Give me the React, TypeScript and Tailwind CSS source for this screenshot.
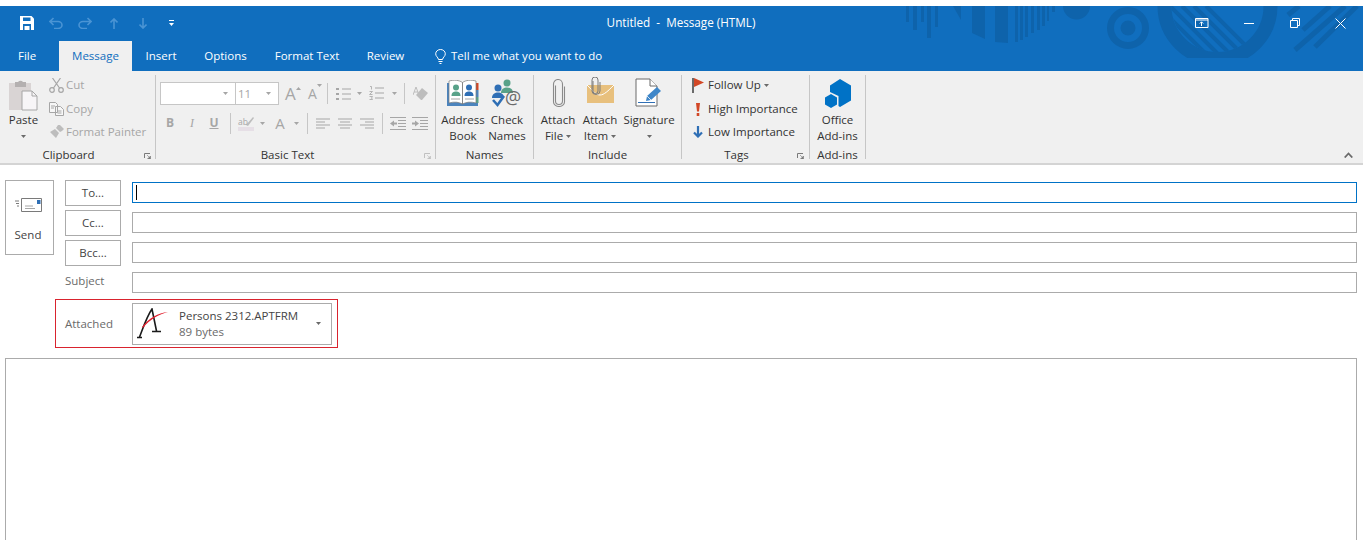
import React from "react";

const Caret = ({ color = "#6a6a6a" }: { color?: string }) => (
  <svg width="5" height="3" viewBox="0 0 5 3" className="shrink-0">
    <path d="M0 0h5L2.5 3z" fill={color} />
  </svg>
);

const Launcher = ({ color = "#7a7a7a" }: { color?: string }) => (
  <svg width="7" height="6" viewBox="0 0 7 6" className="shrink-0">
    <path d="M.5 5V.5H6" fill="none" stroke={color} />
    <path d="M3 2l3 3M6.5 3v3H3.5z" fill={color} stroke={color} strokeWidth=".6" />
  </svg>
);

const Sep = ({ className }: { className: string }) => (
  <div className={`w-px bg-[#c6c6c6] shrink-0 ${className}`} />
);

// three or four short lines, used by the align and indent buttons
const Lines = ({ kind }: { kind: "left" | "center" | "right" }) => {
  const rows: [number, number][] =
    kind === "left"
      ? [[0, 14], [0, 9], [0, 14], [0, 9]]
      : kind === "center"
        ? [[0, 14], [2, 12], [0, 14], [2, 12]]
        : [[0, 14], [5, 14], [0, 14], [5, 14]];
  return (
    <svg width="14" height="11" viewBox="0 0 14 11" className="block">
      {rows.map((r, i) => (
        <path key={i} d={`M${r[0]} ${i * 3 + 1}H${r[1]}`} stroke="#a6a6a6" />
      ))}
    </svg>
  );
};

const SmallRow = ({
  icon,
  label,
  caret,
  className,
}: {
  icon: React.ReactNode;
  label: string;
  caret?: boolean;
  className: string;
}) => (
  <div className={`flex items-center h-[20px] ${className}`}>
    <div className="w-[18px] flex justify-center shrink-0">{icon}</div>
    <span className="ml-[1px] whitespace-nowrap">{label}</span>
    {caret && (
      <div className="ml-[3px]">
        <Caret />
      </div>
    )}
  </div>
);

const BigButton = ({
  icon,
  lines,
  caret,
  className,
}: {
  icon: React.ReactNode;
  lines: string[];
  caret?: boolean;
  className: string;
}) => (
  <div className={`flex flex-col items-center ${className}`}>
    <div className="h-[37px] w-full flex justify-center pt-[4px]">{icon}</div>
    {lines.map((l, i) => (
      <div key={l} className="h-[16px] leading-[16px] whitespace-nowrap flex items-center gap-[3px]">
        {l}
        {caret && lines.length > 1 && i === lines.length - 1 && <Caret />}
      </div>
    ))}
    {caret && lines.length === 1 && (
      <div className="h-[16px] flex items-center">
        <Caret />
      </div>
    )}
  </div>
);

const Group = ({
  label,
  width,
  labelClass = "",
  launcher,
  launcherColor,
  launcherClass = "",
  children,
}: {
  label: string;
  width: string;
  labelClass?: string;
  launcher?: boolean;
  launcherColor?: string;
  launcherClass?: string;
  children: React.ReactNode;
}) => (
  <div className={`${width} h-[84px] border-r border-[#c6c6c6] flex flex-col shrink-0`}>
    <div className="h-[72px]">{children}</div>
    <div className="h-[12px] flex items-start">
      <span className={`flex-1 text-center leading-[16px] ${labelClass}`}>{label}</span>
      {launcher && (
        <div className={`mt-[6px] ${launcherClass}`}>
          <Launcher color={launcherColor} />
        </div>
      )}
    </div>
  </div>
);

const TitleArt = () => (
  <svg
    className="absolute right-0 top-0 w-[457px] h-[65px]"
    viewBox="906 6 457 65"
    fill="#0e63ab"
  >
    <defs>
      <clipPath id="inner">
        <circle cx="1217.5" cy="6" r="46" />
      </clipPath>
      <clipPath id="flat">
        <rect x="906" y="6" width="457" height="52" />
      </clipPath>
    </defs>
    <path d="M906 6h3v16h-3zM913 6h4v24h-4zM921 6h3v16h-3zM927 6h4v32h-4zM935 6h3v21h-3z" />
    <path d="M953 6h8v14zM972 6h13v33l-13-6zM995 6h13v37l-13-1z" />
    <path d="M1015 6h3v36h-3zM1020 6h3v34h-3zM1025 6h3v31h-3zM1031 6h3v27h-3zM1037 6h3v24h-3zM1042 6h3v20h-3zM1047 6h2v15h-2zM1052 6h3v6h-3z" />
    <path d="M1063 6h27a13.500 13.500 0 0 1-27 0z" />
    <circle cx="1128" cy="28" r="17.500" fill="none" stroke="#0e63ab" strokeWidth="7" />
    <circle cx="1128" cy="28" r="7.500" />
    <g clipPath="url(#flat)">
      <circle cx="1217.500" cy="6" r="53" fill="none" stroke="#0e63ab" strokeWidth="14" />
    </g>
    <g clipPath="url(#inner)" stroke="#0e63ab" strokeWidth="4">
      {[1146, 1158, 1170, 1182, 1194, 1206].map((c) => (
        <path key={c} d={`M${c} 6l60 60`} />
      ))}
    </g>
    <g stroke="#0e63ab" strokeWidth="5" fill="none">
      <path d="M1288 15l11-9M1303 30l27-24M1295 50l50-44M1315 47l42-41" />
    </g>
  </svg>
);

const WindowButtons = () => (
  <div className="flex items-center justify-end pr-[17px] h-[32px] relative">
    <svg width="14" height="10" viewBox="0 0 14 10" fill="none" stroke="#fff">
      <path d="M.5.500h12.500v9H.500zM0 2h13" />
      <path d="M6.500 8V4M4.800 5.500l1.700-1.700 1.700 1.700" />
    </svg>
    <svg width="10" height="1" viewBox="0 0 10 1" className="ml-[35px]">
      <path d="M0 .5h10" stroke="#fff" />
    </svg>
    <svg width="10" height="10" viewBox="0 0 10 10" fill="none" stroke="#fff" className="ml-[36px]">
      <path d="M.5 2.500h7v7h-7zM2.500 2.500v-2h7v7h-2" />
    </svg>
    <svg width="11" height="11" viewBox="0 0 11 11" fill="none" stroke="#fff" className="ml-[35px]">
      <path d="M.5.500l10 10M10.500.500l-10 10" />
    </svg>
  </div>
);

const Qat = () => (
  <div className="flex items-center h-[32px] pl-[20px] relative">
    <svg width="14" height="14" viewBox="0 0 14 14">
      <path d="M0 0h11.500L14 2.500V14H0z" fill="#fff" />
      <path d="M3 1.500h7.500v3.500H3zM3 8h8v6H3z" fill="#106ebe" />
      <path d="M4.500 10h5v4h-5z" fill="#fff" />
    </svg>
    <svg width="14" height="12" viewBox="0 0 14 12" fill="none" stroke="#4a94d4" strokeWidth="1.600" className="ml-[15px]">
      <path d="M4.500 1L1 4.500 4.500 8M1.500 4.500H9a4 3.500 0 0 1 0 7H5" />
    </svg>
    <svg width="14" height="12" viewBox="0 0 14 12" fill="none" stroke="#4a94d4" strokeWidth="1.600" className="ml-[15px]">
      <path d="M9.500 1L13 4.500 9.500 8M12.500 4.500H5a4 3.500 0 0 0 0 7h4" />
    </svg>
    <svg width="8" height="11" viewBox="0 0 8 11" fill="none" stroke="#4a94d4" strokeWidth="1.600" className="ml-[18px]">
      <path d="M4 11V1M.5 4.500L4 1l3.500 3.500" />
    </svg>
    <svg width="8" height="11" viewBox="0 0 8 11" fill="none" stroke="#4a94d4" strokeWidth="1.600" className="ml-[21px]">
      <path d="M4 0v10M.5 6.500L4 10l3.500-3.500" />
    </svg>
    <svg width="7" height="7" viewBox="0 0 7 7" className="ml-[21px]">
      <path d="M1 .5h5" stroke="#fff" />
      <path d="M1 3h5L3.500 6z" fill="#fff" />
    </svg>
  </div>
);

const PasteIcon = () => (
  <svg width="29" height="32" viewBox="0 0 29 32">
    <path d="M0 4h22v27H0z" fill="#d9d4d4" />
    <path d="M6 3h3a3 3 0 0 1 5 0h3v5H6z" fill="#b4b0b0" />
    <path d="M13 12h10l5 5v14H13z" fill="#f7f5f7" stroke="#a6a6a6" />
    <path d="M23 12v5h5" fill="none" stroke="#a6a6a6" />
  </svg>
);

const AddressBookIcon = () => (
  <svg width="32" height="26" viewBox="0 0 32 26" className="mt-[1px]">
    <path d="M0 3h31v23H0z" fill="#4c84bd" />
    <path d="M29 3h2.500v7H29z" fill="#d24726" />
    <path d="M29 10h2.500v7H29z" fill="#4c84bd" />
    <path d="M29 17h2.500v6H29z" fill="#58a289" />
    <path d="M2 1c5-1.300 10-1 13.500 1.500V24C12 22 7 21.500 2 23zM29 1c-5-1.300-10-1-13.500 1.500V24c3.500-2 8.500-2.500 13.500-1z" fill="#fff" stroke="#7a7a7a" strokeWidth=".7" />
    <circle cx="9" cy="7.500" r="3" fill="#58a289" />
    <path d="M4.500 16c0-3.500 2-4.500 4.500-4.500s4.500 1 4.500 4.500z" fill="#58a289" />
    <circle cx="22" cy="7.500" r="3" fill="#2f6fb5" />
    <path d="M17.500 16c0-3.500 2-4.500 4.500-4.500s4.500 1 4.500 4.500z" fill="#2f6fb5" />
    <path d="M4 19h9M18 19h9" stroke="#a6a6a6" />
  </svg>
);

const CheckNamesIcon = () => (
  <svg width="32" height="30" viewBox="0 0 32 30">
    <circle cx="16" cy="4" r="3.500" fill="#58a289" />
    <path d="M10 14c0-4 3-5.500 6-5.500s6 1.500 6 5.500z" fill="#58a289" />
    <circle cx="7" cy="9" r="3.500" fill="#2f6fb5" />
    <path d="M1 19c0-4 3-5.500 6-5.500s6 1.500 6 5.500z" fill="#2f6fb5" />
    <path d="M2 21l4.500 5L13 17" fill="none" stroke="#2f6fb5" strokeWidth="2.600" />
    <text x="14" y="25" fontSize="18" fill="#6a6a6a" fontFamily="Open Sans, sans-serif">@</text>
  </svg>
);

const ClipIcon = () => (
  <svg width="15" height="28" viewBox="0 0 15 28" fill="none" stroke="#8a8a8a" strokeWidth="1.100">
    <path d="M4.500 7v15.500a3.500 3.500 0 0 0 7 0V5.500a4.500 4.500 0 0 0-9 0v18a5.500 4.500 0 0 0 11 0V8" transform="translate(0 -.5)" />
  </svg>
);

const AttachItemIcon = () => (
  <svg width="29" height="27" viewBox="0 0 29 27" className="-mt-[2px]">
    <path d="M1 8h27v18H1z" fill="#e8c07d" />
    <path d="M1 8c6 6 9 10 13 10s8-4 14-10" fill="none" stroke="#fff" strokeWidth="1" />
    <path d="M7 4v10a2.500 2.500 0 0 0 5 0V3a2.500 2.500 0 0 0-6 0v11a3.500 3 0 0 0 8 0V5" fill="none" stroke="#7a7a7a" />
  </svg>
);

const SignatureIcon = () => (
  <svg width="28" height="29" viewBox="0 0 28 29" className="-mt-[1px]">
    <path d="M1 1h14l7 7v20H1z" fill="#fff" stroke="#6a6a6a" />
    <path d="M15 1v7h7" fill="#fff" stroke="#6a6a6a" />
    <path d="M3 24.500h17" stroke="#2f6fb5" />
    <path d="M11 23l1-5L22 9l4 4-10 9z" fill="#3f87c9" />
    <path d="M12 18l4 4" stroke="#fff" strokeWidth=".8" />
  </svg>
);

const OfficeIcon = () => (
  <svg width="28" height="30" viewBox="0 0 28 30" fill="#0072c6">
    <path d="M16 0l11 6.500v15L16 28l-1.500-1V17L6 13V6.500z" />
    <path d="M7 15l6 3.500v7L7 29l-6-3.500v-7z" />
  </svg>
);

const AttachmentLogo = () => (
  <svg width="34" height="32" viewBox="0 0 34 32" className="shrink-0">
    <path d="M0 29.500h5M2.500 29C6 20 10 8 15 1l4.500 22M15 23.500h9" fill="none" stroke="#1a1a1a" strokeWidth="1.600" />
    <path d="M5 19C12 10 21 5 31 4 22 6.500 13 11 6 20z" fill="#e01f2d" />
  </svg>
);

const FormButton = ({ label }: { label: string }) => (
  <div className="w-[56px] h-[26px] shrink-0 border border-[#ababab] flex items-center justify-center text-[#444]">
    {label}
  </div>
);

const Field = ({
  focused,
  className = "",
  children,
}: {
  focused?: boolean;
  className?: string;
  children?: React.ReactNode;
}) => (
  <div className={`flex-1 h-[21px] border flex items-center pl-[3px] ${focused ? "border-[#0072c6]" : "border-[#ababab]"} ${className}`}>
    {children}
  </div>
);

const App = () => (
  <div className="w-[1363px] h-[559px] bg-white overflow-hidden pt-[6px] font-['Open_Sans',sans-serif] text-[11.5px] text-[#333]">
    <div className="relative h-[65px] bg-[#106ebe]">
      <TitleArt />
      <div className="grid grid-cols-[1fr_auto_1fr] h-[35px] pt-[1px] text-white">
        <Qat />
        <div className="relative h-[32px] flex items-center whitespace-pre text-[11.7px] pr-[1px]">Untitled  -  Message (HTML)</div>
        <WindowButtons />
      </div>
      <div className="relative flex h-[30px] text-white items-center">
        <div className="w-[59px] pl-[18px]">File</div>
        <div className="w-[73px] h-full bg-[#f0f0f0] text-[#106ebe] flex items-center justify-center">Message</div>
        <div className="w-[58px] text-center">Insert</div>
        <div className="w-[71px] text-center">Options</div>
        <div className="w-[92px] text-center">Format Text</div>
        <div className="w-[65px] text-center">Review</div>
        <svg width="11" height="15" viewBox="0 0 11 15" fill="none" stroke="#fff" className="ml-[17px]">
          <path d="M3.500 10.500C3 8 .7 7.500.7 4.800a4.800 4.300 0 0 1 9.600 0c0 2.700-2.300 3.200-2.800 5.700zM3.500 12.500h4M4.500 14.500h2" />
        </svg>
        <span className="ml-[5px]">Tell me what you want to do</span>
      </div>
    </div>

    <div className="relative h-[94px] bg-[#f0f0f0] border-b-2 border-[#d4d4d4] pt-[4px] flex">
      <Group label="Clipboard" width="w-[156px]" labelClass="pr-[7px]" launcher launcherClass="mr-[4px]">
        <div className="flex">
          <div className="w-[47px] flex flex-col items-center">
            <div className="h-[37px] pt-[4px]">
              <PasteIcon />
            </div>
            <div className="h-[16px] leading-[16px]">Paste</div>
            <div className="h-[16px] flex items-center">
              <Caret />
            </div>
          </div>
          <div className="text-[#a6a6a6]">
            <SmallRow
              className=""
              label="Cut"
              icon={
                <svg width="15" height="15" viewBox="0 0 15 15" fill="none" stroke="#a6a6a6" strokeWidth="1.200">
                  <circle cx="3" cy="12" r="2.300" />
                  <circle cx="12" cy="12" r="2.300" />
                  <path d="M4.500 10L11.500 0M10.500 10L3.500 0" />
                </svg>
              }
            />
            <SmallRow
              className="mt-[4px]"
              label="Copy"
              icon={
                <svg width="15" height="14" viewBox="0 0 15 14" fill="#f7f7f7" stroke="#a6a6a6">
                  <path d="M.5.500h6l2 2v8h-8zM6.500 4.500h5l3 3v6h-8z" />
                  <path d="M2 4h4M2 6h3M8.500 9h4M8.500 11h4" />
                </svg>
              }
            />
            <SmallRow
              className="mt-[3px]"
              label="Format Painter"
              icon={
                <svg width="15" height="14" viewBox="0 0 15 14" fill="#bdbdbd">
                  <path d="M9 0h2l4 4-2 2-2 1-4-4zM6 4l4 4-3 5-6-6z" />
                </svg>
              }
            />
          </div>
        </div>
      </Group>

      <Group label="Basic Text" width="w-[280px]" labelClass="pr-[5px]" launcher launcherColor="#c0c0c0" launcherClass="mr-[4px]">
        <div className="pt-[7px] text-[#a6a6a6]">
          <div className="flex items-center h-[23px]">
            <div className="ml-[4px] w-[76px] h-[23px] bg-white border border-[#c6c6c6] flex items-center justify-end pr-[7px]">
              <Caret color="#a6a6a6" />
            </div>
            <div className="w-[43px] h-[23px] bg-white border border-l-0 border-[#c6c6c6] flex items-center justify-between pl-[2px] pr-[7px]">
              <span>11</span>
              <Caret color="#a6a6a6" />
            </div>
            <div className="ml-[6px] w-[23px] flex items-start text-[17px] leading-[20px]">
              A
              <svg width="5" height="3" viewBox="0 0 5 3" className="mt-[3px]">
                <path d="M0 3h5L2.500 0z" fill="#a6a6a6" />
              </svg>
            </div>
            <div className="w-[19px] flex items-start text-[14px] leading-[20px]">
              A
              <Caret color="#a6a6a6" />
            </div>
            <Sep className="h-[21px]" />
            <svg width="15" height="14" viewBox="0 0 15 14" className="ml-[8px]">
              <path d="M6 2h9M6 7h9M6 12h9" stroke="#a6a6a6" />
              <path d="M0 1h3v2H0zM0 6h3v2H0zM0 11h3v2H0z" fill="#a6a6a6" />
            </svg>
            <div className="ml-[6px]">
              <Caret color="#a6a6a6" />
            </div>
            <svg width="15" height="15" viewBox="0 0 15 15" className="ml-[7px]">
              <path d="M6 2h9M6 7h9M6 12h9" stroke="#a6a6a6" />
              <path d="M1 .5h1.500v3M.5 5.500h3l-3 3h3M.5 10.500h3l-1 1.500 1 1.500h-3" fill="none" stroke="#a6a6a6" strokeWidth=".8" />
            </svg>
            <div className="ml-[8px]">
              <Caret color="#a6a6a6" />
            </div>
            <Sep className="ml-[7px] h-[21px]" />
            <svg width="15" height="15" viewBox="0 0 15 15" className="ml-[8px]">
              <path d="M8 14l-5-5 6-7 6 5-6 7z" fill="#bdbdbd" />
              <path d="M0 9L3 1l3 8M1 6h4" fill="none" stroke="#bdbdbd" />
            </svg>
          </div>
          <div className="flex items-center h-[22px] mt-[7px]">
            <div className="ml-[8px] w-[12px] text-center font-bold text-[12px]">B</div>
            <div className="ml-[10px] w-[12px] text-center italic text-[12px] font-['Liberation_Serif',serif]">I</div>
            <div className="ml-[10px] w-[12px] text-center underline font-bold text-[12px]">U</div>
            <Sep className="ml-[10px] h-[21px]" />
            <svg width="16" height="15" viewBox="0 0 16 15" className="ml-[7px] overflow-visible">
              <path d="M0 11h16v4H0z" fill="#e6dfe6" />
              <path d="M8 9l7-8 1 1-6 8z" fill="#bdbdbd" />
              <text x="0" y="9" fontSize="8.500" fill="#a6a6a6" fontFamily="Open Sans, sans-serif">ab</text>
            </svg>
            <div className="ml-[6px]">
              <Caret color="#a6a6a6" />
            </div>
            <div className="ml-[9px] w-[12px] text-center text-[15px] leading-[20px]">A</div>
            <div className="ml-[8px]">
              <Caret color="#a6a6a6" />
            </div>
            <Sep className="ml-[8px] h-[21px]" />
            <div className="ml-[8px]"><Lines kind="left" /></div>
            <div className="ml-[8px]"><Lines kind="center" /></div>
            <div className="ml-[8px]"><Lines kind="right" /></div>
            <Sep className="ml-[8px] h-[21px]" />
            <svg width="16" height="13" viewBox="0 0 16 13" className="ml-[7px]">
              <path d="M0 .5h16M8 3.500h8M8 6.500h8M8 9.500h8M0 12.500h16" stroke="#a6a6a6" />
              <path d="M0 6.500L4 3.500v2h3v2H4v2z" fill="#a6a6a6" />
            </svg>
            <svg width="16" height="13" viewBox="0 0 16 13" className="ml-[6px]">
              <path d="M0 .5h16M8 3.500h8M8 6.500h8M8 9.500h8M0 12.500h16" stroke="#a6a6a6" />
              <path d="M7 6.500L3 3.500v2H0v2h3v2z" fill="#a6a6a6" />
            </svg>
          </div>
        </div>
      </Group>

      <Group label="Names" width="w-[98px]">
        <div className="flex ml-[5px]">
          <BigButton className="w-[44px]" icon={<AddressBookIcon />} lines={["Address", "Book"]} />
          <BigButton className="w-[44px]" icon={<CheckNamesIcon />} lines={["Check", "Names"]} />
        </div>
      </Group>

      <Group label="Include" width="w-[148px]">
        <div className="flex ml-[4px]">
          <BigButton className="w-[40px]" icon={<ClipIcon />} lines={["Attach", "File"]} caret />
          <BigButton className="w-[40px] ml-[2px]" icon={<AttachItemIcon />} lines={["Attach", "Item"]} caret />
          <BigButton className="w-[54px] ml-[2px]" icon={<SignatureIcon />} lines={["Signature"]} caret />
        </div>
      </Group>

      <Group label="Tags" width="w-[128px]" labelClass="pr-[6px]" launcher launcherClass="mr-[5px]">
        <div className="ml-[7px]">
          <SmallRow
            className=""
            label="Follow Up"
            caret
            icon={
              <svg width="13" height="15" viewBox="0 0 13 15">
                <path d="M0 0h2v15H0z" fill="#6a6a6a" />
                <path d="M2 0l10 4.500L2 9z" fill="#d24726" />
              </svg>
            }
          />
          <SmallRow
            className="mt-[4px]"
            label="High Importance"
            icon={
              <svg width="4" height="13" viewBox="0 0 4 13" fill="#d24726">
                <path d="M0 0h4l-1 8.500H1zM.7 10h2.600v3H.7z" />
              </svg>
            }
          />
          <SmallRow
            className="mt-[3px]"
            label="Low Importance"
            icon={
              <svg width="10" height="12" viewBox="0 0 10 12" fill="none" stroke="#2f6fb5" strokeWidth="2.200">
                <path d="M5 0v10M1 6.500L5 10.500l4-4" />
              </svg>
            }
          />
        </div>
      </Group>

      <Group label="Add-ins" width="w-[56px]">
        <BigButton className="w-full" icon={<OfficeIcon />} lines={["Office", "Add-ins"]} />
      </Group>

      <svg width="9" height="6" viewBox="0 0 9 6" className="absolute right-[10px] bottom-[5px]" fill="none" stroke="#6a6a6a" strokeWidth="1.800">
        <path d="M.7 5.500L4.500 1.500l3.800 4" />
      </svg>
    </div>

    <div className="flex pt-[15px] pl-[5px] pr-[6px] h-[134px]">
      <div className="w-[49px] h-[75px] border border-[#ababab] flex flex-col items-center pr-[3px] shrink-0">
        <svg width="27" height="18" viewBox="0 0 27 18" className="mt-[17px]">
          <path d="M6.500.500h20v13h-20z" fill="#fff" stroke="#7a7a7a" />
          <path d="M22 2h3.500v4H22z" fill="#2f6fb5" />
          <path d="M10 8h8M10 10.500h10" stroke="#a6a6a6" />
          <path d="M0 3h4M1 5.500h3M2 8h2" stroke="#7a7a7a" />
        </svg>
        <span className="mt-[10px] text-[#444]">Send</span>
      </div>
      <div className="flex-1 ml-[11px]">
        <div className="flex items-start gap-[11px]">
          <FormButton label="To..." />
          <Field focused className="mt-[2px]">
            <div className="w-px h-[15px] bg-black" />
          </Field>
        </div>
        <div className="flex items-start gap-[11px] mt-[4px]">
          <FormButton label="Cc..." />
          <Field className="mt-[2px]" />
        </div>
        <div className="flex items-start gap-[11px] mt-[4px]">
          <FormButton label="Bcc..." />
          <Field className="mt-[2px]" />
        </div>
        <div className="flex items-start gap-[11px] mt-[6px]">
          <div className="w-[56px] h-[18px] leading-[18px] text-[#6a6a6a]">Subject</div>
          <Field />
        </div>
      </div>
    </div>

    <div className="ml-[55px] w-[283px] h-[49px] border border-[#d9232e] flex items-center pl-[9px] pt-[1px]">
      <span className="w-[67px] text-[#6a6a6a]">Attached</span>
      <div className="w-[200px] h-[42px] border border-[#ababab] flex items-center pl-[4px] pr-[10px] -mt-[1px]">
        <AttachmentLogo />
        <div className="ml-[8px] flex-1 leading-[16px]">
          <div className="text-[#444]">Persons 2312.APTFRM</div>
          <div className="text-[#6a6a6a]">89 bytes</div>
        </div>
        <Caret />
      </div>
    </div>

    <div className="ml-[5px] mr-[6px] mt-[10px] h-[182px] border border-b-0 border-[#ababab]" />
  </div>
);

export default App;
